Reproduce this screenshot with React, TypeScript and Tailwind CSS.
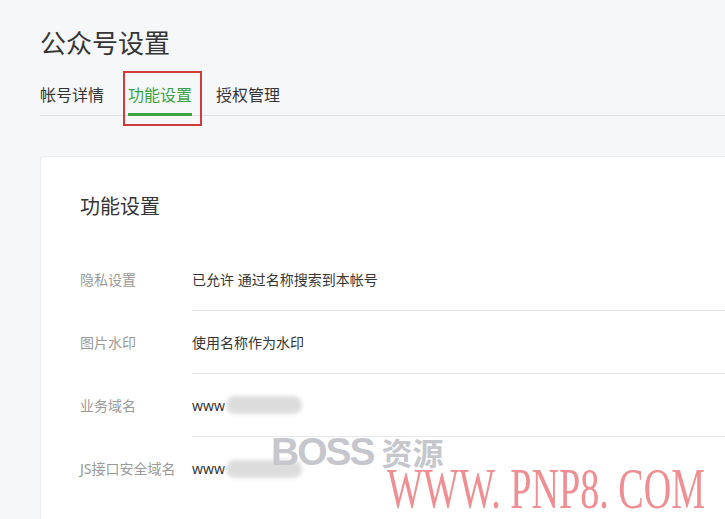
const font = "font-['Noto_Sans','Noto_Sans_CJK_SC',sans-serif]";

const rows = [
  { label: '隐私设置', value: '已允许 通过名称搜索到本帐号' },
  { label: '图片水印', value: '使用名称作为水印' },
  { label: '业务域名', value: 'www', masked: true },
  { label: 'JS接口安全域名', value: 'www', masked: true, last: true },
];

export default function App() {
  return (
    <div className={`relative h-[519px] w-full overflow-hidden bg-[#f6f7f9] pl-10 pt-[25px] ${font}`}>
      {/* 页面标题 */}
      <h1 className="text-[26px] leading-[36px] text-[#353535]">公众号设置</h1>

      {/* 标签页 */}
      <div className="mt-[22px] flex gap-[24px] border-b border-[#e2e3e6]">
        <div className="pb-[8px] text-[16px] leading-[24px] text-[#353535]">帐号详情</div>
        <div className="relative pb-[8px] text-[16px] leading-[24px] text-[#3aa244]">
          功能设置
          <div className="absolute bottom-[-1px] left-0 right-0 h-[3px] bg-[#3ba33f]" />
          <div className="absolute -left-[5px] -right-[10px] -top-[12px] -bottom-[11px] border-[2.5px] border-[#d23b3b]" />
        </div>
        <div className="pb-[8px] text-[16px] leading-[24px] text-[#353535]">授权管理</div>
      </div>

      {/* 功能设置卡片 */}
      <div className="mt-[40px] rounded-tl-[3px] border-l border-t border-[#eceef1] bg-white pb-[60px] pl-[39px] pt-[36px]">
        <h2 className="mb-[27px] text-[20px] leading-[28px] text-[#353535]">功能设置</h2>
        {rows.map((r) => (
          <div key={r.label} className="flex">
            <div className="flex h-[63px] w-[112px] shrink-0 items-center text-[14px] text-[#9a9a9a]">{r.label}</div>
            <div
              className={`flex h-[63px] flex-1 items-center text-[14px] text-[#353535] ${r.last ? '' : 'border-b border-[#e7e8eb]'}`}
            >
              <span>{r.value}</span>
              {r.masked && <span className="ml-[1px] h-[18px] w-[76px] rounded-[9px] bg-[#dcdcdc] blur-[2px]" />}
            </div>
          </div>
        ))}
      </div>

      {/* 水印 */}
      <div className="pointer-events-none absolute left-[271px] top-[430px] flex items-baseline gap-[8px] text-[#c6c7cd]">
        <span className="font-['Liberation_Sans',sans-serif] text-[39px] font-bold leading-[44px] tracking-[-2px]">BOSS</span>
        <span className="font-['Noto_Sans_CJK_SC',sans-serif] text-[31px] font-bold leading-[44px]">资源</span>
      </div>
      <div className="pointer-events-none absolute left-[387px] top-[461px] origin-left scale-x-[0.68] whitespace-nowrap font-['Liberation_Serif',serif] text-[56px] leading-[56px] text-[#ef8f94]">
        WWW. PNP8. COM
      </div>
    </div>
  );
}
